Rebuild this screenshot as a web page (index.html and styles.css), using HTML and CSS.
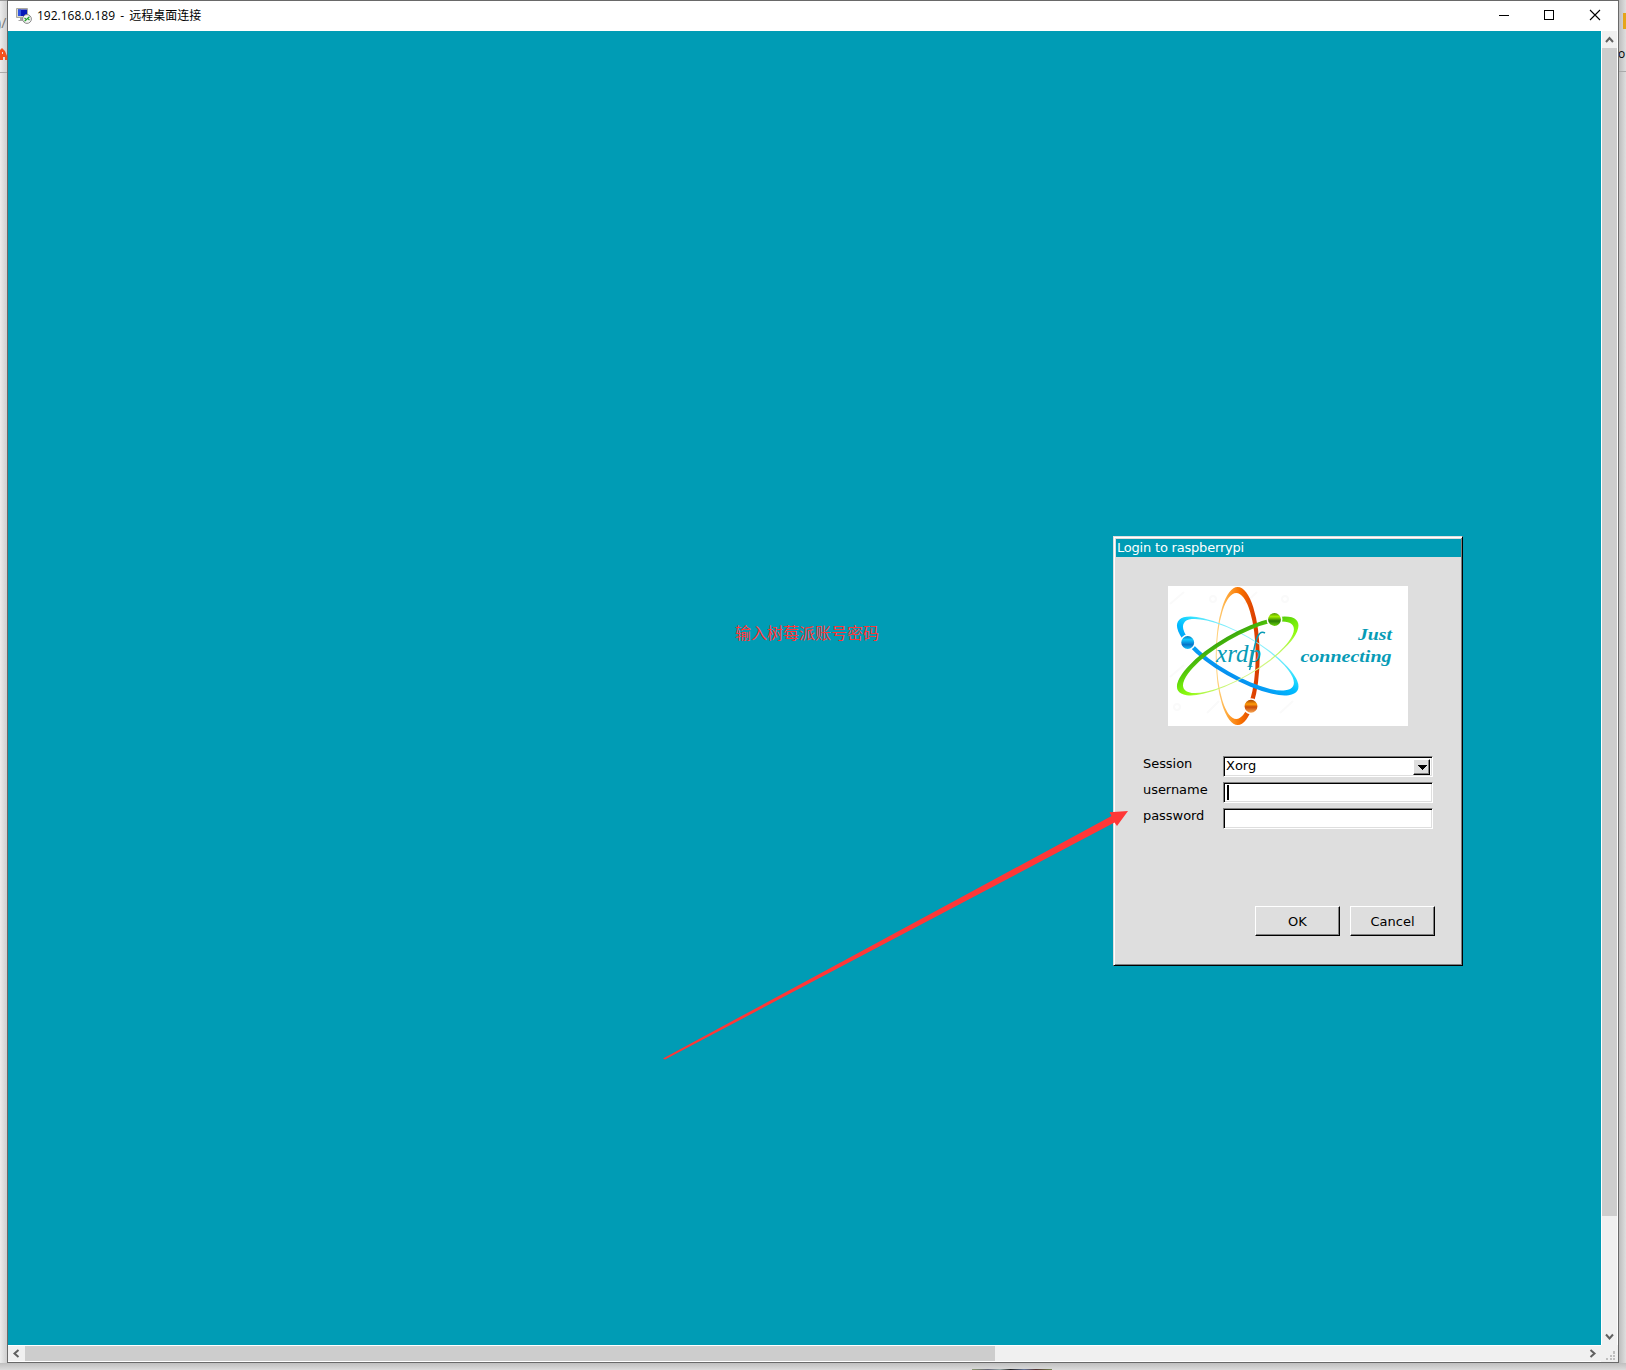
FILE: index.html
```html
<!DOCTYPE html>
<html lang="zh-CN">
<head>
<meta charset="utf-8">
<title>192.168.0.189 - 远程桌面连接</title>
<link rel="stylesheet" href="styles.css">
</head>
<body>
<div class="edge edge-left"><span class="url">)/</span><svg class="bookmark" width="7" height="14" viewBox="0 0 7 14"><path d="M0 3L2 1l3 3 2 5v4H5v-3H3v3H0zM2 5v2h1V5z" fill-rule="evenodd"/></svg></div>
<main class="window">
  <header class="titlebar">
    <svg class="app-icon" width="16" height="16" viewBox="0 0 16 16">
      <path d="M.5.5h11v9H.5z" fill="#d8d8d0" stroke="#aaa99f"/>
      <path d="M2 1.500h9V8H2z" fill="#0718b8"/><path d="M2 1.500h3V8H2z" fill="#3156e0"/>
      <path d="M4 10h5v2H4zM2.500 12h7v1h-7z" fill="#a5a5a5"/>
      <circle cx="11" cy="11" r="4.400" fill="#f4f4f4" stroke="#8c8c8c"/>
      <path d="M8.500 10l2 1.600-2 1.600M13.500 8.800l-2 1.600 2 1.600" fill="none" stroke="#25a12c" stroke-width="1.200"/>
    </svg>
    <h1>192.168.0.189 - 远程桌面连接</h1>
    <svg class="controls" width="138" height="30" viewBox="0 0 138 30" fill="none" stroke="#000">
      <path d="M19 14.500h10M64.500 9.500h9v9h-9z" shape-rendering="crispEdges"/>
      <path d="M110 9l10 10M120 9l-10 10" stroke-width="1.100"/>
    </svg>
  </header>
  <div class="view">
    <section class="desktop">
      <form class="login">
        <h2>Login to raspberrypi</h2>
        <svg class="logo" width="240" height="140" viewBox="0 0 240 140">
          <defs>
            <linearGradient id="orange"><stop offset="0" stop-color="#ffd98a"/><stop offset=".25" stop-color="#ffab3d"/><stop offset=".55" stop-color="#f97300"/><stop offset=".85" stop-color="#df4300"/><stop offset="1" stop-color="#d63a00"/></linearGradient>
            <linearGradient id="blue"><stop offset="0" stop-color="#96f2fb"/><stop offset=".3" stop-color="#24dcff"/><stop offset=".55" stop-color="#00bbff"/><stop offset="1" stop-color="#078eef"/></linearGradient>
            <linearGradient id="green"><stop offset="0" stop-color="#d8f58c"/><stop offset=".3" stop-color="#91fb12"/><stop offset=".55" stop-color="#70e80a"/><stop offset="1" stop-color="#39a70b"/></linearGradient>
            <linearGradient id="ballO" x2="0" y2="1"><stop stop-color="#973400"/><stop offset=".35" stop-color="#ff9c0a"/><stop offset=".55" stop-color="#c84b08"/><stop offset="1" stop-color="#ffb35c"/></linearGradient>
            <linearGradient id="ballB" x2="0" y2="1"><stop stop-color="#006cae"/><stop offset=".3" stop-color="#12c9ff"/><stop offset=".65" stop-color="#0873c8"/><stop offset="1" stop-color="#19cdff"/></linearGradient>
            <linearGradient id="ballG" x2="0" y2="1"><stop stop-color="#438600"/><stop offset=".3" stop-color="#a2ef00"/><stop offset=".6" stop-color="#297b05"/><stop offset="1" stop-color="#74e20b"/></linearGradient>
            <path id="orbit" fill-rule="evenodd" d="M47.700 70a22 69 0 1 0 44 0a22 69 0 1 0-44 0zM48.700 70a19.500 63 0 1 0 39 0a19.500 63 0 1 0-39 0z"/>
          </defs>
          <rect width="240" height="140" fill="#fff"/>
          <g fill="none" stroke="#fafafa" stroke-width="2"><path d="M2 18L16 6M76 18L89 6M2 91L16 79M39 127L51 115M112 127L125 115"/><circle cx="45" cy="13" r="3"/><circle cx="117" cy="13" r="3"/><circle cx="9" cy="121" r="3"/></g>
          <use href="#orbit" fill="url(#orange)"/>
          <use href="#orbit" fill="url(#blue)" transform="rotate(120 69.700 70)"/>
          <use href="#orbit" fill="url(#green)" transform="rotate(240 69.700 70)"/>
          <g stroke="#fff" stroke-width="1.500">
            <circle cx="83" cy="120.300" r="7.200" fill="url(#ballO)"/>
            <circle cx="19.700" cy="56.500" r="7.200" fill="url(#ballB)"/>
            <circle cx="106.500" cy="33.500" r="7.200" fill="url(#ballG)"/>
          </g>
          <text class="brand" x="48" y="76" textLength="45">xrdp</text>
          <path d="M81.500 84C84 77 85 65 88 55C90 48 93 44.500 97 47" fill="none" stroke="#079bb6" stroke-width="1.500"/>
          <text class="slogan" x="190" y="54" textLength="34" lengthAdjust="spacingAndGlyphs">Just</text>
          <text class="slogan" x="132.500" y="76" textLength="91" lengthAdjust="spacingAndGlyphs">connecting</text>
        </svg>
        <div class="fields">
          <label>Session</label><div class="box select"><span>Xorg</span><b class="drop"><svg width="10" height="5" viewBox="0 0 10 5" shape-rendering="crispEdges"><path d="M0 0h10L5 5z"/></svg></b></div>
          <label>username</label><div class="box"><i class="caret"></i></div>
          <label>password</label><div class="box"></div>
        </div>
        <div class="buttons"><button type="button">OK</button><button type="button">Cancel</button></div>
      </form>
    </section>
    <div class="vscroll">
      <svg width="15" height="16" viewBox="0 0 15 16"><path d="M4 11l3.500-4 3.500 4"/></svg>
      <span class="vthumb"></span>
      <svg class="end" width="15" height="16" viewBox="0 0 15 16"><path d="M4 5.500l3.500 4 3.500-4"/></svg>
    </div>
    <div class="hscroll">
      <svg width="17" height="15" viewBox="0 0 17 15"><path d="M10.500 4l-4 3.500 4 3.500"/></svg>
      <span class="hthumb"></span>
      <svg class="end" width="17" height="15" viewBox="0 0 17 15"><path d="M6.500 4l4 3.500-4 3.500"/></svg>
    </div>
    <svg class="grip" width="16" height="16" viewBox="0 0 16 16" shape-rendering="crispEdges"><path d="M11 6h2v2h-2zM8 9h2v2H8zM11 9h2v2h-2zM5 12h2v2H5zM8 12h2v2H8zM11 12h2v2h-2z"/></svg>
  </div>
</main>
<div class="edge edge-right"><span class="folder"></span><span class="letter">o</span></div>
<footer class="behind"><span class="thumbnail"></span></footer>
<p class="note">输入树莓派账号密码</p>
<svg class="arrow" width="470" height="252" viewBox="0 0 470 252"><path d="M0 250.500L448.500 8 446.500 4.300 465 3 454 18 451.500 14.500 2 251.500z"/></svg>
</body>
</html>
```
FILE: styles.css
```css
* { box-sizing: border-box; }
body {
  margin: 0; width: 1626px; height: 1370px; overflow: hidden; position: relative;
  display: grid; grid-template: 1363px 7px / 7px 1612px 7px;
  background: #e2e2e2; font-family: "Open Sans", "Noto Sans CJK SC", sans-serif;
}
h1, h2, p { margin: 0; font-weight: normal; }
.edge { position: relative; overflow: hidden; }
.edge-left { background: linear-gradient(90deg, #ececec, #cfcfcf); border-top: 1px solid #999; }
.edge-left::after, .edge-right::after { content: ""; position: absolute; top: 71px; left: 0; width: 7px; height: 1px; background: #aaa; }
.url { position: absolute; left: -3px; top: 12px; font-size: 14px; line-height: 20px; color: #777; }
.bookmark { position: absolute; left: 0; top: 46px; fill: #f4511e; }
.edge-right { background: linear-gradient(90deg, #bdbdbd, #dedede); }
.folder { position: absolute; left: 4px; top: 13px; width: 3px; height: 16px; background: #e5a51a; }
.letter { position: absolute; left: -1px; top: 44px; font-size: 12px; line-height: 20px; }
.behind { grid-column: 1 / -1; background: linear-gradient(#bfbfbf, #dcdcdc); display: flex; align-items: flex-end; padding-left: 972px; }
.thumbnail { width: 80px; height: 1px; background: linear-gradient(90deg, #8d9b73, #667 20%, #9aa 35%, #222 48%, #679 65%, #533 80%, #785); }
.window { border: 1px solid #696969; background: #fff; display: flex; flex-direction: column; box-shadow: 0 2px 8px rgba(0,0,0,.2); }
.titlebar { height: 30px; display: flex; align-items: center; padding-left: 8px; }
.app-icon { margin-right: 5px; }
h1 { font-size: 12px; line-height: 20px; word-spacing: 2px; flex: 1; }
.view { display: grid; grid-template: 1314px 17px / 1593px 17px; }
.desktop { background: #009cb5; padding: 505px 0 0 1105px; }
.login { width: 350px; height: 430px; padding: 1px; background: #dedede; border: 1px solid; border-color: #dedede #000 #000 #dedede; box-shadow: inset 1px 1px #fff, inset -1px -1px #808080; font: 13px/16px "DejaVu Sans", sans-serif; display: flex; flex-direction: column; }
.login h2 { width: 345px; height: 18px; margin: 1px 0 0 1px; padding-left: 1px; background: #009cb5; color: #fff; font-size: 13px; line-height: 18px; letter-spacing: -.2px; }
.logo { margin: 29px 0 0 53px; flex: none; }
.brand { font: italic 25px "Liberation Serif", serif; fill: #079bb6; }
.slogan { font: italic bold 17px "Liberation Serif", serif; fill: #079bb6; }
.fields { margin: 30px 0 0 28px; display: grid; grid-template-columns: 80px 210px; row-gap: 5px; }
.fields label { height: 21px; line-height: 15px; letter-spacing: -.05px; }
.box { height: 21px; background: #fff; border: 1px solid; border-color: #808080 #fff #fff #808080; box-shadow: inset 1px 1px #000, inset -1px -1px #dedede; padding: 2px; display: flex; }
.select { justify-content: space-between; line-height: 14px; padding-left: 2px; }
.drop { width: 17px; height: 16px; background: #dedede; border: 1px solid; border-color: #fff #000 #000 #fff; box-shadow: inset -1px -1px #808080; display: grid; place-items: center; }
.caret { width: 2px; height: 15px; margin-left: 1px; background: #000; }
.buttons { display: flex; gap: 10px; margin: 77px 0 0 140px; }
button { width: 85px; height: 30px; padding: 2px 0 0; background: #dedede; border: 1px solid; border-color: #fff #000 #000 #fff; box-shadow: inset -1px -1px #808080; font: inherit; color: #000; }
.vscroll, .hscroll { background: #f0f0f0; display: flex; }
.vscroll { flex-direction: column; border: solid #fff; border-width: 0 1px; grid-row: 1; grid-column: 2; }
.hscroll { border: solid #fff; border-width: 1px 0; }
.vscroll svg, .hscroll svg { fill: none; stroke: #606060; stroke-width: 2; flex: none; }
.vthumb { height: 1168px; margin-top: 1px; background: #cdcdcd; }
.hthumb { width: 970px; background: #cdcdcd; }
.vscroll .end { margin-top: auto; }
.hscroll .end { margin-left: auto; }
.grip { background: #f0f0f0; fill: #bfbfbf; width: 17px; height: 17px; }
.note { position: absolute; left: 735px; top: 620px; font: 16px/24px "Noto Sans CJK SC", sans-serif; color: #ff3737; white-space: nowrap; }
.arrow { position: absolute; left: 663px; top: 808px; fill: #ff3737; }
```
